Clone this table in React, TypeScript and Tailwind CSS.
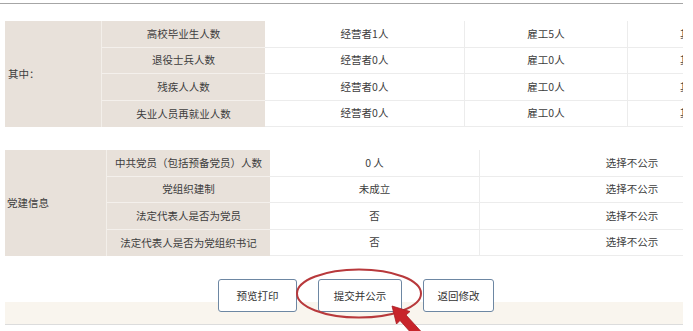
import React from 'react';

const font = { fontFamily: '"Noto Sans CJK SC", "Noto Sans", sans-serif' };

const staffRows = [
  { label: '高校毕业生人数', owner: '经营者1人', hired: '雇工5人' },
  { label: '退役士兵人数', owner: '经营者0人', hired: '雇工0人' },
  { label: '残疾人人数', owner: '经营者0人', hired: '雇工0人' },
  { label: '失业人员再就业人数', owner: '经营者0人', hired: '雇工0人' },
];

const partyRows = [
  { label: '中共党员（包括预备党员）人数', value: '0 人' },
  { label: '党组织建制', value: '未成立' },
  { label: '法定代表人是否为党员', value: '否' },
  { label: '法定代表人是否为党组织书记', value: '否' },
];

function StaffTable() {
  return (
    <div className="ml-[5px] w-[678px] overflow-hidden">
      <div className="grid w-max grid-cols-[97px_163px_200px_163px_163px] grid-rows-[repeat(4,26.5px)] text-[10.5px] text-[#3d3d3d]">
        <div className="row-span-4 flex items-center border-r border-[#f3efea] bg-[#e8e1da] pl-[3px]">其中：</div>
        {staffRows.map((row, i) => (
          <React.Fragment key={row.label}>
            <div
              className={`flex items-center justify-center bg-[#e8e1da] ${
                i < staffRows.length - 1 ? 'border-b border-[#f4f0ec]' : ''
              }`}
            >
              {row.label}
            </div>
            <div className="flex items-center justify-center border-b border-r border-[#ececec]">{row.owner}</div>
            <div className="flex items-center justify-center border-b border-r border-[#ececec]">{row.hired}</div>
            <div className="flex items-center pl-[52px] border-b border-[#ececec]">其他人员0人</div>
          </React.Fragment>
        ))}
      </div>
    </div>
  );
}

function PartyTable() {
  return (
    <div className="ml-[5px] mt-[23px] w-[678px] overflow-hidden">
      <div className="grid w-max grid-cols-[102px_163px_210px_304px] grid-rows-[repeat(4,26.5px)] text-[10.5px] text-[#3d3d3d]">
        <div className="row-span-4 flex items-center border-r border-[#f3efea] bg-[#e8e1da] pl-[2px]">党建信息</div>
        {partyRows.map((row, i) => (
          <React.Fragment key={row.label}>
            <div
              className={`flex items-center justify-center bg-[#e8e1da] ${
                i < partyRows.length - 1 ? 'border-b border-[#f4f0ec]' : ''
              }`}
            >
              {row.label}
            </div>
            <div className="flex items-center justify-center border-b border-r border-[#ececec]">{row.value}</div>
            <div className="flex items-center justify-center border-b border-[#ececec]">选择不公示</div>
          </React.Fragment>
        ))}
      </div>
    </div>
  );
}

function ActionBar() {
  const btn =
    'flex h-[33px] items-center justify-center rounded-[3px] border border-[#6d87a3] bg-white text-[10.5px] text-[#333]';
  return (
    <div className="ml-[5px] h-[69px] w-[678px] border-b border-[#dcdcdc] bg-[linear-gradient(to_bottom,#ffffff_46px,#f9f5ee_46px)] pt-[23px]">
      <div className="flex gap-[21px] pl-[213px]">
        <button className={`${btn} w-[79px]`}>预览打印</button>
        <button className={`${btn} w-[84px]`}>提交并公示</button>
        <button className={`${btn} w-[71px]`}>返回修改</button>
      </div>
    </div>
  );
}

export default function App() {
  return (
    <div className="relative h-[331px] w-[693px] overflow-hidden bg-white" style={font}>
      <div className="mt-[3px] h-px w-[683px] bg-[#a6a6a6]" />
      <div className="mt-[17px]">
        <StaffTable />
      </div>
      <PartyTable />
      <ActionBar />

      {/* red ring + arrow marking the submit button */}
      <svg className="pointer-events-none absolute inset-0" width="693" height="331" viewBox="0 0 693 331">
        <ellipse cx="359" cy="293.5" rx="62" ry="24" fill="none" stroke="#b8393c" strokeWidth="2" />
        <polygon
          points="392,306 410,311.5 406,315 427,338 421,344 400,320.5 396.5,324"
          fill="#c8242b"
          stroke="#a81c22"
          strokeWidth="0.8"
          strokeLinejoin="round"
        />
      </svg>
    </div>
  );
}
